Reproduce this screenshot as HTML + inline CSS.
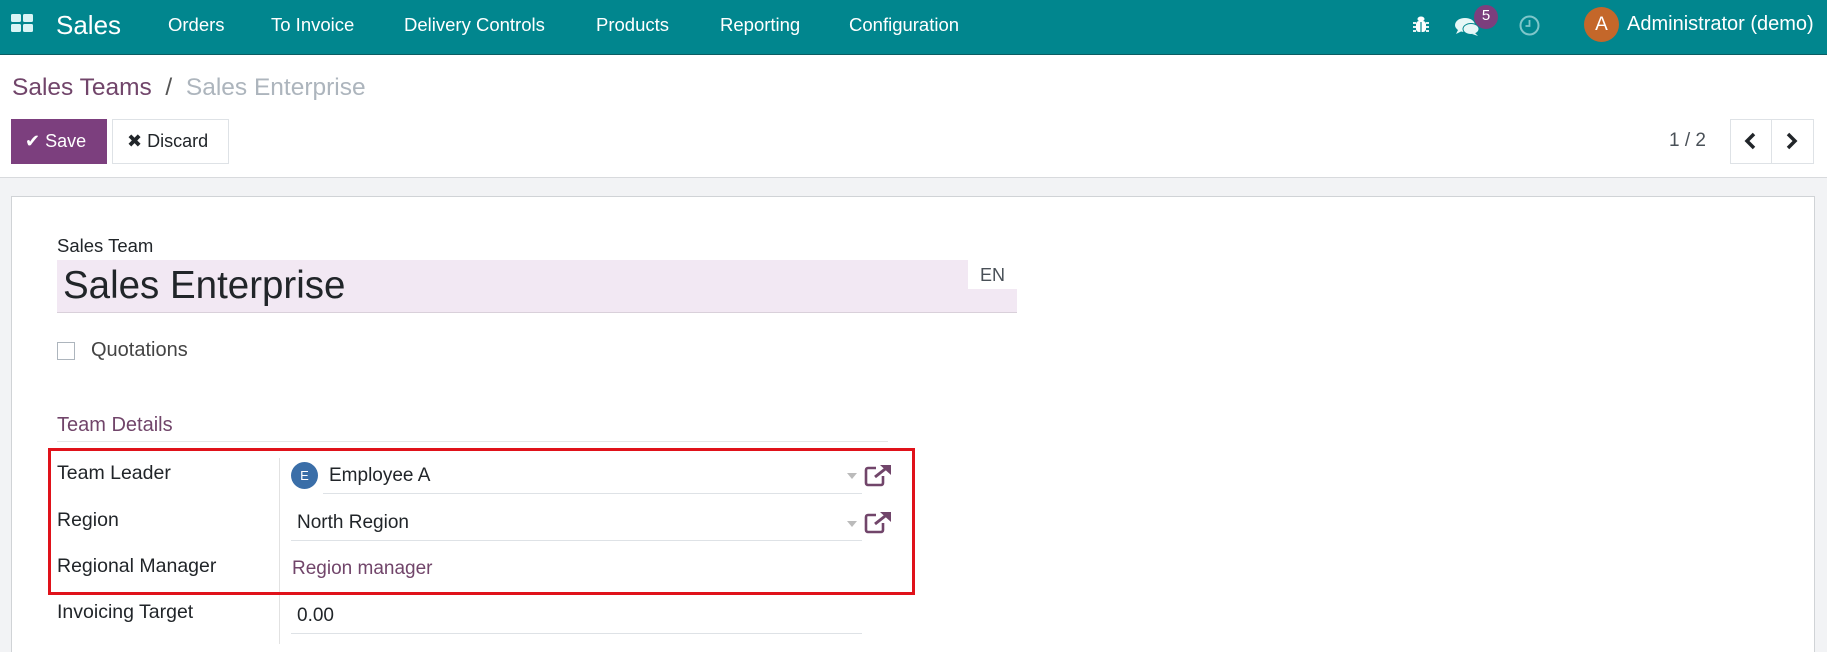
<!DOCTYPE html>
<html style="width:1827px;height:652px;overflow:hidden"><head><meta charset="utf-8">
<style>
*{margin:0;padding:0;box-sizing:border-box}
body{width:1827px;height:652px;overflow:hidden;background:#fff;font-family:"Liberation Sans",Roboto,sans-serif;position:relative;color:#212529}
.a{position:absolute;white-space:nowrap}
.nav{position:absolute;left:0;top:0;width:1827px;height:55px;background:#01868e;border-bottom:1px solid #0b5d63}
.nav .m{position:absolute;top:14px;font-size:18.5px;color:#fff}
.lbl{font-size:19.5px;color:#212529}
</style></head><body>
<div class="nav">
  <svg class="a" style="left:11px;top:14px" width="22" height="18" viewBox="0 0 22 18"><rect x="0" y="0" width="10" height="8" rx="1.5" fill="#d9f4f5"/><rect x="12" y="0" width="10" height="8" rx="1.5" fill="#d9f4f5"/><rect x="0" y="10" width="10" height="8" rx="1.5" fill="#d9f4f5"/><rect x="12" y="10" width="10" height="8" rx="1.5" fill="#d9f4f5"/></svg>
  <div class="a" style="left:56px;top:10px;font-size:26px;color:#fff">Sales</div>
  <div class="m" style="left:168px">Orders</div>
  <div class="m" style="left:271px">To Invoice</div>
  <div class="m" style="left:404px">Delivery Controls</div>
  <div class="m" style="left:596px">Products</div>
  <div class="m" style="left:720px">Reporting</div>
  <div class="m" style="left:849px">Configuration</div>
  <svg class="a" style="left:1412px;top:16px" width="18" height="17" viewBox="0 0 18 17"><ellipse cx="9" cy="3" rx="3.5" ry="2.5" fill="#fff"/><rect x="4" y="5" width="10" height="11" rx="3" fill="#fff"/><line x1="9" y1="6" x2="9" y2="16" stroke="#01868e" stroke-width="1.2"/><path d="M1 7h3M1 11h3M1 15h3M14 7h3M14 11h3M14 15h3" stroke="#fff" stroke-width="1.8"/></svg>
  <svg class="a" style="left:1455px;top:17px" width="25" height="20" viewBox="0 0 25 20"><ellipse cx="10" cy="8" rx="10" ry="7" fill="#e6f7f7"/><path d="M3 13l-2 4 6-3z" fill="#e6f7f7"/><ellipse cx="16" cy="12" rx="8" ry="5.5" fill="#e6f7f7" stroke="#01868e" stroke-width="1"/><path d="M20 16l3 3-6-2z" fill="#e6f7f7"/></svg>
  <div class="a" style="left:1474px;top:5px;width:24px;height:24px;border-radius:12px;background:#7c3f7d;color:#fff;font-size:15px;text-align:center;line-height:22px">5</div>
  <svg class="a" style="left:1519px;top:15px" width="21" height="21" viewBox="0 0 21 21"><circle cx="10.5" cy="10.5" r="9" fill="none" stroke="#7ec6ca" stroke-width="2"/><path d="M10.5 5v6h-4" fill="none" stroke="#7ec6ca" stroke-width="1.8"/></svg>
  <div class="a" style="left:1584px;top:7px;width:35px;height:35px;border-radius:50%;background:#c4672a;color:#fff;font-size:19px;text-align:center;line-height:35px">A</div>
  <div class="a" style="left:1627px;top:13px;font-size:20px;color:#fff">Administrator (demo)</div>
</div>

<div class="a" style="left:12px;top:74px;font-size:24.5px;color:#71456a">Sales Teams <span style="color:#555">&nbsp;/&nbsp;</span> <span style="color:#adb5bd">Sales Enterprise</span></div>

<div class="a" style="left:11px;top:119px;width:96px;height:45px;background:#7c3f7e;color:#fff;font-size:18px;line-height:45px;padding-left:14px">✔ Save</div>
<div class="a" style="left:112px;top:119px;width:117px;height:45px;border:1px solid #dee2e6;color:#212529;font-size:18px;line-height:43px;padding-left:14px">✖ Discard</div>

<div class="a" style="left:1669px;top:130px;font-size:19px;color:#495057">1 / 2</div>
<div class="a" style="left:1730px;top:119px;width:84px;height:45px;border:1px solid #dee2e6"></div>
<div class="a" style="left:1771px;top:119px;width:1px;height:45px;background:#dee2e6"></div>
<svg class="a" style="left:1743px;top:132px" width="14" height="18" viewBox="0 0 14 18"><path d="M11 2L4 9l7 7" fill="none" stroke="#212529" stroke-width="3.5"/></svg>
<svg class="a" style="left:1785px;top:132px" width="14" height="18" viewBox="0 0 14 18"><path d="M3 2l7 7-7 7" fill="none" stroke="#212529" stroke-width="3.5"/></svg>

<div class="a" style="left:0;top:177px;width:1827px;height:1px;background:#d8dadd"></div>
<div class="a" style="left:0;top:178px;width:1827px;height:474px;background:#f2f3f5"></div>
<div class="a" style="left:11px;top:196px;width:1804px;height:460px;background:#fff;border:1px solid #d0d3d6;border-bottom:none"></div>

<div class="a" style="left:57px;top:235px;font-size:18.5px;color:#212529">Sales Team</div>
<div class="a" style="left:57px;top:260px;width:960px;height:53px;background:#f2e8f3;border-bottom:1px solid #d9d0da"></div>
<div class="a" style="left:63px;top:264px;font-size:38.5px;color:#212529">Sales Enterprise</div>
<div class="a" style="left:968px;top:260px;width:49px;height:29px;background:#fff;font-size:18px;color:#495057;text-align:center;line-height:30px">EN</div>

<div class="a" style="left:57px;top:342px;width:18px;height:18px;border:1px solid #adb5bd;background:#fff"></div>
<div class="a" style="left:91px;top:339px;font-size:20px;color:#444">Quotations</div>

<div class="a" style="left:57px;top:414px;font-size:20px;color:#71456a">Team Details</div>
<div class="a" style="left:57px;top:441px;width:831px;height:1px;background:#e6e6e6"></div>

<div class="a" style="left:279px;top:458px;width:1px;height:186px;background:#e2e2e2"></div>

<div class="a lbl" style="left:57px;top:462px">Team Leader</div>
<div class="a lbl" style="left:57px;top:509px">Region</div>
<div class="a lbl" style="left:57px;top:555px">Regional Manager</div>
<div class="a lbl" style="left:57px;top:601px">Invoicing Target</div>

<div class="a" style="left:291px;top:462px;width:27px;height:27px;border-radius:50%;background:#3a6ea8;color:#fff;font-size:13px;text-align:center;line-height:27px">E</div>
<div class="a" style="left:329px;top:465px;font-size:19px;color:#212529">Employee A</div>
<div class="a" style="left:323px;top:493px;width:539px;height:1px;background:#dee2e6"></div>
<div class="a" style="left:847px;top:473px;width:0;height:0;border-left:5px solid transparent;border-right:5px solid transparent;border-top:6px solid #bbb"></div>

<div class="a" style="left:297px;top:512px;font-size:19px;color:#212529">North Region</div>
<div class="a" style="left:291px;top:540px;width:571px;height:1px;background:#dee2e6"></div>
<div class="a" style="left:847px;top:521px;width:0;height:0;border-left:5px solid transparent;border-right:5px solid transparent;border-top:6px solid #bbb"></div>

<svg class="a" style="left:864px;top:464px" width="28" height="23" viewBox="0 0 28 23"><path d="M12 4H4a2 2 0 0 0-2 2v13a2 2 0 0 0 2 2h13a2 2 0 0 0 2-2v-7" fill="none" stroke="#71456a" stroke-width="2.6"/><path d="M11 13L25 2" stroke="#71456a" stroke-width="3"/><path d="M16 1h11v10z" fill="#71456a"/></svg>
<svg class="a" style="left:864px;top:511px" width="28" height="23" viewBox="0 0 28 23"><path d="M12 4H4a2 2 0 0 0-2 2v13a2 2 0 0 0 2 2h13a2 2 0 0 0 2-2v-7" fill="none" stroke="#71456a" stroke-width="2.6"/><path d="M11 13L25 2" stroke="#71456a" stroke-width="3"/><path d="M16 1h11v10z" fill="#71456a"/></svg>

<div class="a" style="left:292px;top:558px;font-size:19px;color:#71456a">Region manager</div>

<div class="a" style="left:297px;top:605px;font-size:19px;color:#212529">0.00</div>
<div class="a" style="left:291px;top:633px;width:571px;height:1px;background:#dee2e6"></div>

<div class="a" style="left:48px;top:448px;width:867px;height:147px;border:3px solid #e0121a"></div>
</body></html>
